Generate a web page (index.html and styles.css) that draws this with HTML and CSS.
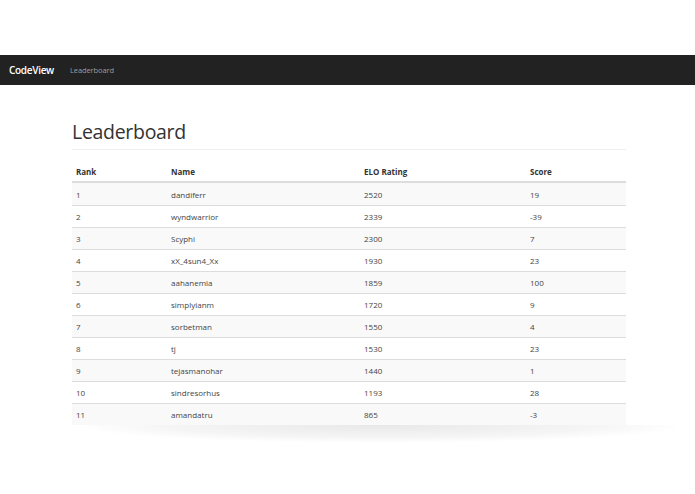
FILE: index.html
```html
<!DOCTYPE html>
<html>
<head>
<meta charset="utf-8">
<title>CodeView - Leaderboard</title>
<link rel="stylesheet" href="styles.css">
</head>
<body>
<nav class="navbar">
  <span class="brand">CodeView</span>
  <a class="nav-link">Leaderboard</a>
</nav>
<main class="container">
  <h1 class="page-title">Leaderboard</h1>
  <table class="board">
    <colgroup>
      <col class="c-rank"><col class="c-name"><col class="c-elo"><col class="c-score">
    </colgroup>
    <thead>
      <tr><th>Rank</th><th>Name</th><th>ELO Rating</th><th>Score</th></tr>
    </thead>
    <tbody>
      <tr><td>1</td><td>dandiferr</td><td>2520</td><td>19</td></tr>
      <tr><td>2</td><td>wyndwarrior</td><td>2339</td><td>-39</td></tr>
      <tr><td>3</td><td>Scyphi</td><td>2300</td><td>7</td></tr>
      <tr><td>4</td><td>xX_4sun4_Xx</td><td>1930</td><td>23</td></tr>
      <tr><td>5</td><td>aahanemia</td><td>1859</td><td>100</td></tr>
      <tr><td>6</td><td>simplyianm</td><td>1720</td><td>9</td></tr>
      <tr><td>7</td><td>sorbetman</td><td>1550</td><td>4</td></tr>
      <tr><td>8</td><td>tj</td><td>1530</td><td>23</td></tr>
      <tr><td>9</td><td>tejasmanohar</td><td>1440</td><td>1</td></tr>
      <tr><td>10</td><td>sindresorhus</td><td>1193</td><td>28</td></tr>
      <tr><td>11</td><td>amandatru</td><td>865</td><td>-3</td></tr>
    </tbody>
  </table>
  <div class="table-shadow"></div>
</main>
</body>
</html>
```
FILE: styles.css
```css
html, body {
  margin: 0;
  padding: 0;
  background: #fff;
  font-family: "Open Sans", "Liberation Sans", sans-serif;
  color: #333;
}

.navbar {
  margin-top: 55px;
  height: 30px;
  background: #222;
  display: flex;
  align-items: center;
  padding-left: 9px;
  box-sizing: border-box;
}

.brand {
  color: #fff;
  font-weight: 600;
  font-size: 10px;
  letter-spacing: -0.3px;
  width: 61px;
}

.nav-link {
  color: #9d9d9d;
  font-size: 7.5px;
  letter-spacing: -0.1px;
}

.container {
  margin-left: 72px;
  width: 554px;
}

.page-title {
  margin: 0;
  padding-top: 35px;
  padding-bottom: 5px;
  font-size: 19.5px;
  font-weight: 400;
  letter-spacing: -0.3px;
  line-height: 24px;
  color: #333;
  border-bottom: 1px solid #eee;
}

.board {
  margin-top: 12px;
  width: 554px;
  border-collapse: collapse;
  font-size: 8px;
  table-layout: fixed;
}

.c-rank { width: 95px; }
.c-name { width: 193px; }
.c-elo { width: 166px; }
.c-score { width: 100px; }

.board th {
  text-align: left;
  font-weight: 700;
  height: 19px;
  padding: 0 4px;
  border-bottom: 2px solid #ddd;
  color: #333;
}

.board td {
  height: 21px;
  padding: 0 4px;
  border-top: 1px solid #ddd;
  color: #444;
}

.board tbody tr:first-child td {
  border-top: none;
  height: 22px;
}

.board tbody tr:nth-child(odd) {
  background: #f9f9f9;
}

.table-shadow {
  height: 18px;
  margin-left: 14px;
  margin-right: -50px;
  background: radial-gradient(ellipse 52% 100% at 50% 0%, rgba(0,0,0,0.09), rgba(0,0,0,0.04) 70%, rgba(0,0,0,0) 100%);
}
```
